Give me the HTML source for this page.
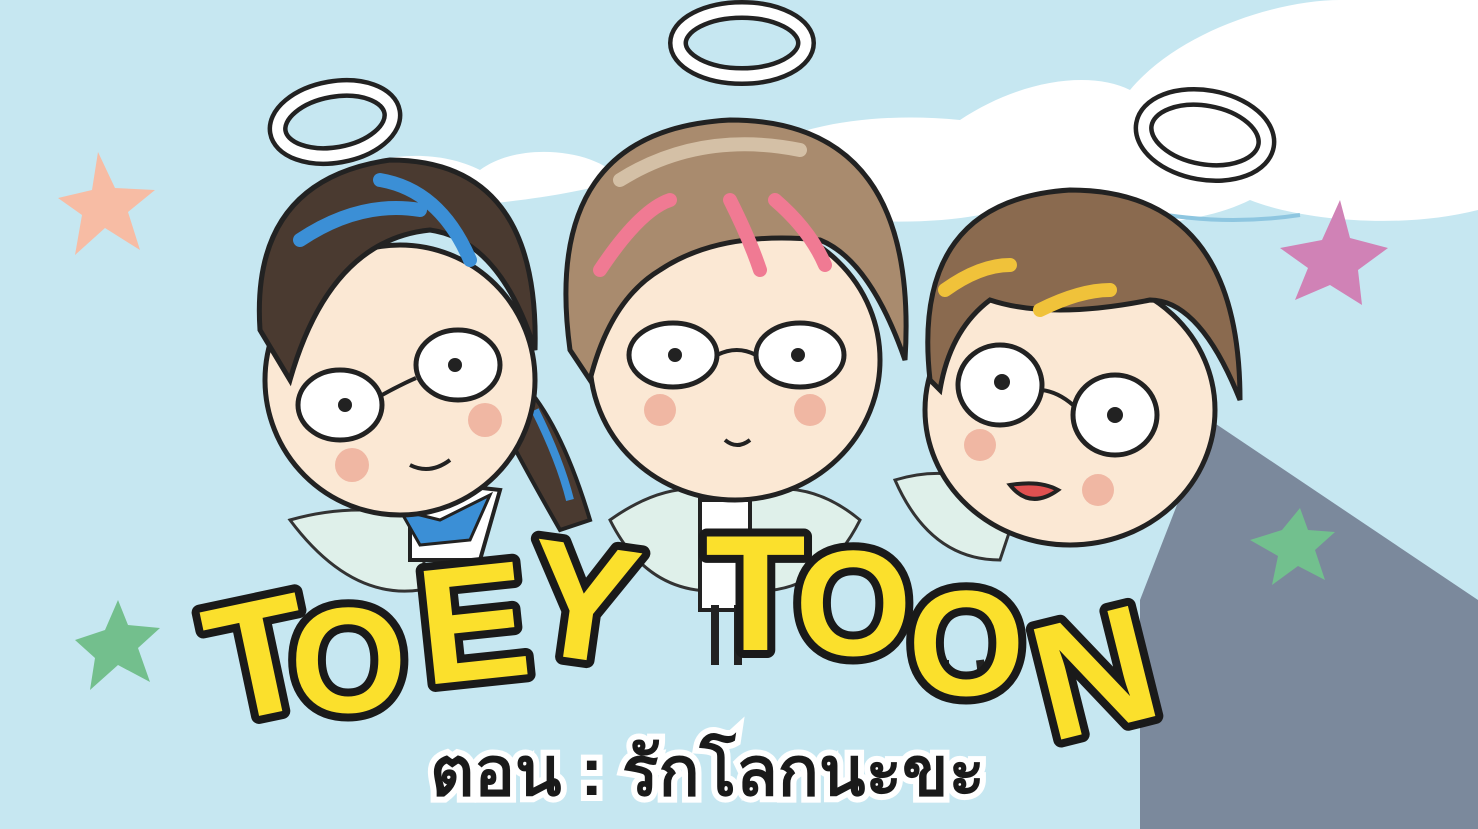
<!DOCTYPE html>
<html><head><meta charset="utf-8"><style>
html,body{margin:0;padding:0;width:1478px;height:829px;overflow:hidden;background:#c6e7f1}
svg{display:block}
</style></head><body>
<svg width="1478" height="829" viewBox="0 0 1478 829" xmlns="http://www.w3.org/2000/svg">
<rect width="1478" height="829" fill="#c6e7f1"/>
<path d="M1478 0 L1478 210 C1400 230 1300 220 1250 200 C1180 235 1050 230 980 215 C900 230 760 220 720 180 C760 130 860 110 960 120 C1020 80 1090 70 1130 90 C1180 30 1280 0 1340 0 Z" fill="#ffffff"/>
<path d="M300 210 C330 160 420 140 480 170 C520 140 600 150 620 180 C560 200 420 215 300 210 Z" fill="#ffffff"/>
<path d="M1100 200 Q1200 230 1300 215" stroke="#8ec6e0" stroke-width="4" fill="none"/>
<path d="M1140 829 L1140 600 L1210 420 L1478 600 L1478 829 Z" fill="#7b899c"/>
<g stroke-linejoin="round">
<path d="M98 152 L115 188 L155 190 L128 212 L140 250 L105 228 L75 255 L82 215 L58 198 L92 190 Z" fill="#f7bca4"/>
<path d="M118 600 L128 625 L160 628 L138 648 L150 682 L118 665 L90 690 L95 658 L75 640 L105 630 Z" fill="#73bf8d"/>
<path d="M1340 200 L1350 238 L1388 248 L1358 270 L1362 305 L1330 285 L1295 300 L1308 268 L1280 248 L1322 240 Z" fill="#d082b6"/>
<path d="M1300 508 L1308 530 L1335 532 L1315 550 L1325 580 L1298 566 L1272 585 L1278 556 L1250 540 L1282 530 Z" fill="#72c08e"/>
</g>
<g fill="none" stroke="#222" stroke-width="20">
<ellipse cx="335" cy="122" rx="58" ry="33" transform="rotate(-10 335 122)"/>
<ellipse cx="742" cy="43" rx="64" ry="33"/>
<ellipse cx="1205" cy="135" rx="62" ry="37" transform="rotate(10 1205 135)"/>
</g>
<g fill="none" stroke="#fff" stroke-width="11">
<ellipse cx="335" cy="122" rx="58" ry="33" transform="rotate(-10 335 122)"/>
<ellipse cx="742" cy="43" rx="64" ry="33"/>
<ellipse cx="1205" cy="135" rx="62" ry="37" transform="rotate(10 1205 135)"/>
</g>
<path d="M290 520 Q360 500 430 520 L420 590 Q350 600 290 520Z" fill="#dff0ea" stroke="#333" stroke-width="3"/>
<path d="M610 520 Q680 470 740 500 L730 590 Q650 600 610 520Z" fill="#dff0ea" stroke="#333" stroke-width="3"/>
<path d="M730 500 Q800 470 860 520 Q820 600 740 590Z" fill="#dff0ea" stroke="#333" stroke-width="3"/>
<path d="M895 480 Q960 460 1020 500 L1000 560 Q930 560 895 480Z" fill="#dff0ea" stroke="#333" stroke-width="3"/>
<path d="M520 380 Q560 420 590 520 L560 530 Q520 460 500 420Z" fill="#4a3a30" stroke="#222" stroke-width="4"/>
<path d="M535 410 Q560 460 570 500" stroke="#3b8fd6" stroke-width="8" fill="none"/>
<path d="M410 480 L500 490 L480 560 L410 560Z" fill="#fff" stroke="#222" stroke-width="4"/>
<path d="M400 510 L440 520 L490 495 L470 540 L420 545Z" fill="#3b8fd6" stroke="#222" stroke-width="3"/>
<ellipse cx="400" cy="380" rx="135" ry="135" fill="#fbe8d4" stroke="#222" stroke-width="5"/>
<path d="M260 330 Q250 180 390 160 Q540 160 535 350 Q500 240 430 230 Q330 240 290 380 Z" fill="#4a3a30" stroke="#222" stroke-width="5"/>
<path d="M300 240 Q360 200 420 210 M380 180 Q440 190 470 260" stroke="#3b8fd6" stroke-width="14" fill="none" stroke-linecap="round"/>
<g fill="#fff" stroke="#222" stroke-width="5">
<ellipse cx="340" cy="405" rx="42" ry="35"/><ellipse cx="458" cy="365" rx="42" ry="35"/>
</g>
<path d="M382 395 Q400 385 416 378" stroke="#222" stroke-width="4" fill="none"/>
<circle cx="345" cy="405" r="7" fill="#222"/><circle cx="455" cy="365" r="7" fill="#222"/>
<circle cx="352" cy="465" r="17" fill="#f0b7a3"/><circle cx="485" cy="420" r="17" fill="#f0b7a3"/>
<path d="M410 465 Q430 475 450 460" stroke="#222" stroke-width="4" fill="none"/>
<rect x="700" y="500" width="50" height="110" fill="#fff" stroke="#222" stroke-width="4"/>
<path d="M715 605 L715 665 M738 605 L738 665" stroke="#222" stroke-width="8"/>
<ellipse cx="735" cy="360" rx="145" ry="140" fill="#fbe8d4" stroke="#222" stroke-width="5"/>
<path d="M570 350 Q540 130 730 120 Q920 120 905 360 Q870 260 820 240 Q720 230 660 270 Q610 300 590 380Z" fill="#a98b6e" stroke="#222" stroke-width="5"/>
<path d="M600 270 Q640 210 670 200 M730 200 Q750 240 760 270 M775 200 Q810 230 825 265" stroke="#f07a93" stroke-width="14" fill="none" stroke-linecap="round"/>
<path d="M620 180 Q700 130 800 150" stroke="#d4c0a6" stroke-width="14" fill="none" stroke-linecap="round"/>
<g fill="#fff" stroke="#222" stroke-width="5">
<ellipse cx="673" cy="355" rx="44" ry="32"/><ellipse cx="800" cy="355" rx="44" ry="32"/>
</g>
<path d="M717 355 Q737 345 756 355" stroke="#222" stroke-width="4" fill="none"/>
<circle cx="675" cy="355" r="7" fill="#222"/><circle cx="798" cy="355" r="7" fill="#222"/>
<circle cx="660" cy="410" r="16" fill="#f0b7a3"/><circle cx="810" cy="410" r="16" fill="#f0b7a3"/>
<path d="M725 440 Q737 450 750 440" stroke="#222" stroke-width="4" fill="none"/>
<path d="M945 660 L945 700 M980 660 L985 700" stroke="#222" stroke-width="8"/>
<ellipse cx="1070" cy="410" rx="145" ry="135" fill="#fbe8d4" stroke="#222" stroke-width="5"/>
<path d="M930 380 Q910 200 1070 190 Q1240 190 1240 400 Q1200 300 1150 300 Q1050 320 990 300 Q950 330 940 390Z" fill="#8a6a4f" stroke="#222" stroke-width="5"/>
<path d="M945 290 Q980 265 1010 265 M1040 310 Q1080 290 1110 290" stroke="#f0c23a" stroke-width="14" fill="none" stroke-linecap="round"/>
<g fill="#fff" stroke="#222" stroke-width="5">
<ellipse cx="1000" cy="385" rx="42" ry="40"/><ellipse cx="1115" cy="415" rx="42" ry="40"/>
</g>
<path d="M1042 390 Q1058 392 1073 405" stroke="#222" stroke-width="4" fill="none"/>
<circle cx="1002" cy="382" r="8" fill="#222"/><circle cx="1115" cy="415" r="8" fill="#222"/>
<circle cx="980" cy="445" r="16" fill="#f0b7a3"/><circle cx="1098" cy="490" r="16" fill="#f0b7a3"/>
<path d="M1010 485 Q1030 510 1058 490 Q1040 480 1010 485Z" fill="#e05050" stroke="#222" stroke-width="4"/>
<g font-family="Liberation Sans, sans-serif" font-weight="900" font-size="165" fill="#fbe02c" stroke="#1a1a1a" stroke-width="16" paint-order="stroke" stroke-linejoin="round">
<text x="205" y="712" transform="rotate(-12 270 640)">T</text>
<text x="290" y="712" font-size="150">O</text>
<text x="418" y="680" transform="rotate(-6 470 620)">E</text>
<text x="528" y="660" transform="rotate(8 590 600)">Y</text>
<text x="705" y="650">T</text>
<text x="795" y="655" font-size="150">O</text>
<text x="908" y="695" font-size="150">O</text>
<text x="1030" y="725" transform="rotate(-14 1110 650)">N</text>
</g>
<text x="430" y="795" font-family="Liberation Sans, DejaVu Sans, sans-serif" font-weight="bold" font-size="68" fill="#1a1a1a" stroke="#fff" stroke-width="12" paint-order="stroke">ตอน : รักโลกนะขะ</text>
</svg>
</body></html>
